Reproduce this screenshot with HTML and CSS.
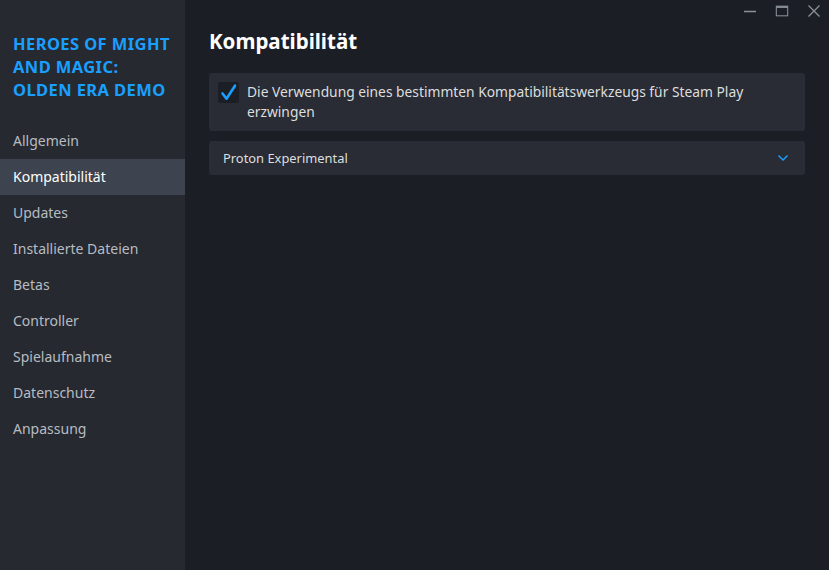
FILE: index.html
```html
<!DOCTYPE html>
<html lang="de">
<head>
    <meta charset="UTF-8">
    <title>Eigenschaften</title>
    <link rel="stylesheet" href="styles.css">
</head>
<body>
    <div class="window">
        <nav class="sidebar">
            <h2 class="game-title">HEROES OF MIGHT AND MAGIC: OLDEN ERA DEMO</h2>
            <ul class="nav-list">
                <li class="nav-item">Allgemein</li>
                <li class="nav-item active">Kompatibilität</li>
                <li class="nav-item">Updates</li>
                <li class="nav-item">Installierte Dateien</li>
                <li class="nav-item">Betas</li>
                <li class="nav-item">Controller</li>
                <li class="nav-item">Spielaufnahme</li>
                <li class="nav-item">Datenschutz</li>
                <li class="nav-item">Anpassung</li>
            </ul>
        </nav>
        <main class="content">
            <div class="titlebar">
                <span class="win-btn">
                    <svg width="14" height="14" viewBox="0 0 14 14"><path d="M1 7.5h12" stroke="#8b929a" stroke-width="1.5"/></svg>
                </span>
                <span class="win-btn">
                    <svg width="16" height="14" viewBox="0 0 16 14"><rect x="1.5" y="1.5" width="13" height="11" fill="none" stroke="#8b929a" stroke-width="1.2"/><path d="M1.5 2.5h13" stroke="#8b929a" stroke-width="2"/></svg>
                </span>
                <span class="win-btn">
                    <svg width="14" height="14" viewBox="0 0 14 14"><path d="M1.5 1.5l11 11M12.5 1.5l-11 11" stroke="#8b929a" stroke-width="1.3"/></svg>
                </span>
            </div>
            <h1 class="page-title">Kompatibilität</h1>
            <div class="card check-card">
                <span class="checkbox">
                    <svg width="21" height="21" viewBox="0 0 21 21"><path d="M4.5 11.5l4 5.2 8.5-13" fill="none" stroke="#1a9fff" stroke-width="2.6" stroke-linecap="round" stroke-linejoin="round"/></svg>
                </span>
                <span class="check-label">Die Verwendung eines bestimmten Kompatibilitätswerkzeugs für Steam Play erzwingen</span>
            </div>
            <div class="card dropdown">
                <span>Proton Experimental</span>
                <svg width="12" height="8" viewBox="0 0 12 8"><path d="M1.5 1.5l4.5 4.5 4.5-4.5" fill="none" stroke="#1a9fff" stroke-width="1.5"/></svg>
            </div>
        </main>
    </div>
</body>
</html>
```

FILE: styles.css
```css
html,
body {
    margin: 0;
    padding: 0;
    height: 100%;
    font-family: "Noto Sans", "Open Sans", sans-serif;
    background-color: #1b1e25;
}

* {
    box-sizing: border-box;
}

.window {
    display: flex;
    width: 829px;
    height: 570px;
}

/* SIDEBAR */
.sidebar {
    width: 185px;
    flex-shrink: 0;
    background-color: #262930;
    padding-top: 32px;
}

.game-title {
    margin: 0 0 22px 0;
    padding: 0 12px 0 13px;
    color: #1a9fff;
    font-size: 16.5px;
    font-weight: bold;
    letter-spacing: 0.4px;
    line-height: 23px;
}

.nav-list {
    list-style: none;
    margin: 0;
    padding: 0;
}

.nav-item {
    height: 36px;
    line-height: 36px;
    padding-left: 13px;
    font-size: 14px;
    color: #b7bcc2;
}

.nav-item.active {
    background-color: #3d4450;
    color: #ffffff;
}

/* CONTENT */
.content {
    flex: 1;
    padding: 0 24px 0 24px;
    background-color: #1b1e25;
}

.titlebar {
    display: flex;
    justify-content: flex-end;
    gap: 18px;
    height: 24px;
    padding-top: 4px;
    margin-right: -16px;
}

.win-btn {
    display: flex;
    width: 14px;
    height: 14px;
    justify-content: center;
}

.page-title {
    margin: 3px 0 18px 0;
    color: #ffffff;
    font-size: 20.5px;
    font-weight: bold;
    line-height: 28px;
}

.card {
    background-color: #292c34;
    border-radius: 3px;
}

.check-card {
    display: flex;
    align-items: flex-start;
    padding: 9px 12px 9px 9px;
    margin-bottom: 10px;
}

.checkbox {
    display: block;
    width: 21px;
    height: 21px;
    flex-shrink: 0;
    margin-right: 8px;
    border-radius: 2px;
    background-color: #1b1e25;
}

.checkbox svg {
    display: block;
}

.check-label {
    color: #dcdedf;
    font-size: 13.8px;
    line-height: 20px;
}

.dropdown {
    display: flex;
    align-items: center;
    justify-content: space-between;
    height: 34px;
    padding: 0 16px 0 14px;
    color: #dcdedf;
    font-size: 12.9px;
}
```
